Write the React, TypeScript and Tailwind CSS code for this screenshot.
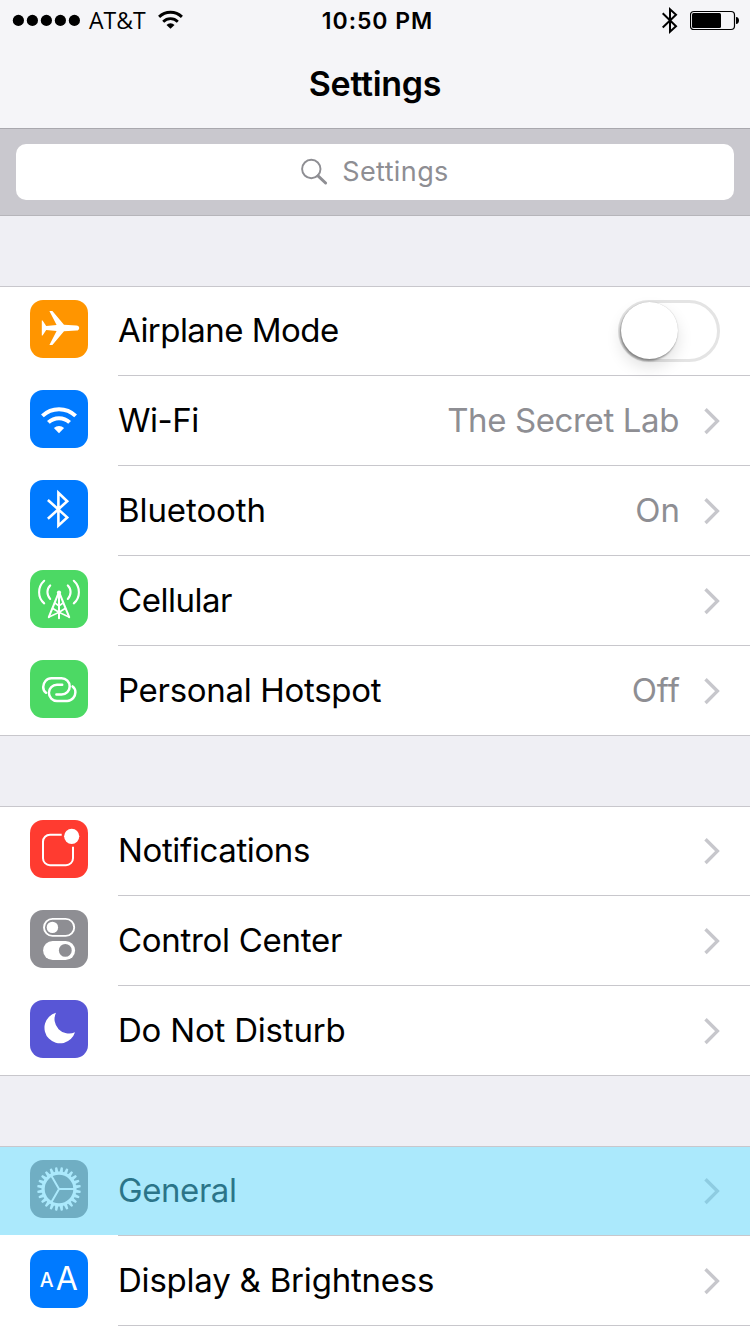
import type { ReactNode } from "react";

function AirplaneIcon() {
  return (
    <path
      fill="#fff"
      d="M46.4 25.4C48.2 25.4 49.2 26.6 49.2 28C49.2 29.4 48.2 30.6 46.4 30.6L34 31.2L22.4 45H19.4L26.6 31L16.2 30.1L12.6 35.4H11.8V20.6H12.6L16.2 25.9L26.6 25L19.4 11H22.4L34 24.8Z"
    />
  );
}

function WifiIcon() {
  return (
    <>
      <g fill="none" stroke="#fff" strokeWidth="4">
        <path d="M12.4 25.9A24 24 0 0 1 45.6 25.9" />
        <path d="M18.4 32.4A15.4 15.4 0 0 1 39.6 32.4" />
      </g>
      <path fill="#fff" d="M29 43.2L23.9 37.9A7.8 7.8 0 0 1 34.1 37.9Z" />
    </>
  );
}

function BluetoothIcon() {
  return (
    <path
      fill="none"
      stroke="#fff"
      strokeWidth="2.6"
      d="M17.9 20L37.2 37.4L28.4 45.6V12.8L37.2 21.2L17.9 38.8"
    />
  );
}

function CellularIcon() {
  return (
    <g fill="none" stroke="#fff" strokeLinecap="round">
      <g strokeWidth="2.1">
        <path d="M14.2 10.8C7.4 17 7.4 27.5 14.2 33.4" />
        <path d="M20.2 15.4C16.5 19 16.5 25.2 20.2 28.9" />
        <path d="M43.8 10.8C50.6 17 50.6 27.5 43.8 33.4" />
        <path d="M37.8 15.4C41.5 19 41.5 25.2 37.8 28.9" />
      </g>
      <circle cx="29" cy="22.6" r="2.1" fill="#fff" stroke="none" />
      <path strokeWidth="2" d="M28.6 23L18.8 47.2M29.4 23L39.2 47.2M29 23V48.2" />
      <path strokeWidth="1.6" d="M19 47L29 42.3L39 47M22.5 38.3L29 42.3L35.5 38.3M25 33L29 36L33 33" />
    </g>
  );
}

function HotspotIcon() {
  const link =
    "M16 32.8C14.1 31.4 13.2 29.4 13.2 27C13.2 22.6 16.5 18.3 21.4 18.3H31.6A8.1 8.1 0 0 1 31.6 34.5H26.4";
  return (
    <g fill="none" stroke="#fff" strokeWidth="2.5" strokeLinecap="round">
      <path d={link} />
      <path d={link} transform="rotate(180 29.3 29.6)" />
    </g>
  );
}

function NotificationsIcon() {
  return (
    <>
      <path
        fill="none"
        stroke="#fff"
        strokeWidth="2"
        d="M31.7 14.7H20A7 7 0 0 0 13 21.7V38.2A7 7 0 0 0 20 45.2H36A7 7 0 0 0 43 38.2V26.7"
      />
      <circle cx="41.7" cy="16.3" r="7.6" fill="#fff" />
    </>
  );
}

function ControlCenterIcon() {
  return (
    <>
      <rect x="14" y="8.9" width="30.2" height="17" rx="8.5" fill="none" stroke="#fff" strokeWidth="1.9" />
      <circle cx="22.4" cy="17.4" r="5.7" fill="#fff" />
      <rect x="13.1" y="31" width="32" height="19" rx="9.5" fill="#fff" />
      <circle cx="35.3" cy="40.4" r="6.4" fill="#8e8e93" />
    </>
  );
}

function MoonIcon() {
  return <path fill="#fff" d="M26 12.7A15.6 15.6 0 1 0 45 32.3A14.5 14.5 0 0 1 26 12.7Z" />;
}

function GearIcon() {
  return (
    <>
      {Array.from({ length: 24 }, (_, i) => (
        <path
          key={i}
          fill="#fff"
          d="M45.5 27.3L50.6 27.9Q51.2 29 50.6 30.1L45.5 30.7Z"
          transform={`rotate(${7.5 + i * 15} 29 29)`}
        />
      ))}
      <circle cx="29" cy="29" r="15.9" fill="none" stroke="#fff" strokeWidth="3.2" />
      <path fill="none" stroke="#fff" strokeWidth="2" d="M29 29H44M29 29L21.5 16M29 29L21.5 42" />
    </>
  );
}

function DisplayIcon() {
  return (
    <g fill="#fff" className="font-[Inter,sans-serif]">
      <text x="9.7" y="37" fontSize="19.5" fontWeight="500">A</text>
      <text x="25.8" y="40" fontSize="32" fontWeight="400">A</text>
    </g>
  );
}

function Chevron() {
  return (
    <svg className="h-[90px] w-4 shrink-0" viewBox="0 0 16 90" fill="none" stroke="#c7c7cc" strokeWidth="3.4">
      <path d="M1.5 33.2L13.4 45.1L1.5 57" />
    </svg>
  );
}

function Switch() {
  return (
    <div className="mt-3.5 h-[62px] w-[102px] shrink-0 rounded-full border-[3px] border-[#e4e4e4] bg-white">
      <div className="-mt-px h-[57px] w-[57px] rounded-full bg-white shadow-[0_8px_16px_rgba(0,0,0,0.12),-1px_2px_2px_rgba(0,0,0,0.35),0_0_1px_rgba(0,0,0,0.25)]" />
    </div>
  );
}

type RowProps = {
  icon: ReactNode;
  color: string;
  label: string;
  tracking: string;
  value?: string;
  valueTracking?: string;
  toggle?: boolean;
  last?: boolean;
  highlighted?: boolean;
};

function Row({ icon, color, label, tracking, value, valueTracking, toggle, last, highlighted }: RowProps) {
  return (
    <li className={`relative flex h-[90px] ${last ? "border-b border-[#c8c7cc]" : ""}`}>
      <div className="w-[118px] shrink-0 pt-3.5 pl-[30px]">
        <svg className={`h-[58px] w-[58px] rounded-[13px] ${color}`} viewBox="0 0 58 58">
          {icon}
        </svg>
      </div>
      <div className={`flex h-[90px] grow pr-[30px] ${last ? "" : "border-b border-[#c8c7cc]"}`}>
        <span
          className={`grow text-[33px] leading-[88px] whitespace-nowrap ${highlighted ? "text-[#0b1f24]" : "text-black"} ${tracking}`}
        >
          {label}
        </span>
        {value && (
          <span className={`text-[33px] leading-[88px] whitespace-nowrap text-[#8e8e93] ${valueTracking}`}>
            {value}
          </span>
        )}
        {toggle ? <Switch /> : <Chevron />}
      </div>
      {highlighted && <div className="absolute inset-x-0 top-px h-[88px] bg-[#4fd2f8]/48" />}
    </li>
  );
}

function Group({ children }: { children: ReactNode }) {
  return (
    <section className="mt-[70px] border-t border-[#c8c7cc] bg-white">
      <ul className="-mt-px">{children}</ul>
    </section>
  );
}

function StatusBar() {
  return (
    <div className="grid h-[41px] grid-cols-3">
      <div className="flex">
        <svg className="ml-3 h-[41px] w-[70px]" viewBox="12 0 70 41">
          {[18.4, 32.4, 46.4, 60.4, 74.4].map((x) => (
            <circle key={x} cx={x} cy="20.4" r="5.6" />
          ))}
        </svg>
        <span className="ml-[7px] w-[58px] font-['Open_Sans',sans-serif] text-[23px] leading-[40px]">AT&amp;T</span>
        <svg className="ml-[11px] h-[41px] w-[26px]" viewBox="158 0 26 41">
          <g fill="none" stroke="#000">
            <path strokeWidth="2.9" d="M159.1 16.9A16.3 16.3 0 0 1 181.9 16.9" />
            <path strokeWidth="2.8" d="M163.2 21.7A10.4 10.4 0 0 1 177.8 21.7" />
          </g>
          <path d="M170.5 28.8L166.5 25A5.6 5.6 0 0 1 174.5 25Z" />
        </svg>
      </div>
      <span className="pl-[5px] text-center text-[23px] leading-[43px] font-semibold tracking-[0.95px]">10:50 PM</span>
      <div className="flex justify-end">
        <svg className="mr-[10px] h-[41px] w-5" viewBox="660 0 20 41" fill="none" stroke="#000" strokeWidth="2">
          <path d="M662.7 13.3L676 26.2L670 31.7V9.3L676 14.8L662.7 27.4" />
        </svg>
        <svg className="mr-2.5 h-[41px] w-[50px]" viewBox="690 0 50 41">
          <rect x="690.5" y="11.5" width="44" height="18" rx="3.5" fill="none" stroke="#000" strokeWidth="1.2" />
          <rect x="692" y="13" width="29" height="15" rx="1.5" />
          <path d="M736 17C738 17 739 18.7 739 20.5C739 22.3 738 24 736 24Z" />
        </svg>
      </div>
    </div>
  );
}

export default function App() {
  return (
    <div className="h-[1334px] w-[750px] overflow-hidden bg-[#efeff4] font-[Inter,sans-serif] text-black">
      <header className="h-32 bg-[#f5f5f8]">
        <StatusBar />
        <h1 className="text-center text-[34px] leading-[86px] font-semibold tracking-[-0.3px]">Settings</h1>
      </header>
      <div className="h-[88px] border-t border-b border-t-[#a9a8ae] border-b-[#b6b5ba] bg-[#c9c8ce] px-4 pt-[15px]">
        <div className="flex h-14 items-center justify-center rounded-[10px] bg-white pr-px">
          <svg className="mr-3.5 h-7 w-7" viewBox="300 158 28 28" fill="none" stroke="#8e8e93">
            <circle cx="311.3" cy="169" r="9.2" strokeWidth="1.9" />
            <path d="M318 175.8L325.6 183" strokeWidth="3" strokeLinecap="round" />
          </svg>
          <span className="text-[27px] leading-[56px] tracking-[0.4px] text-[#8e8e93]">Settings</span>
        </div>
      </div>

      <Group>
        <Row icon={<AirplaneIcon />} color="bg-[#ff9500]" label="Airplane Mode" tracking="tracking-[-0.54px]" toggle />
        <Row
          icon={<WifiIcon />}
          color="bg-[#007aff]"
          label="Wi-Fi"
          tracking="tracking-[-0.5px]"
          value="The Secret Lab"
          valueTracking="mr-[25px] tracking-[-0.38px]"
        />
        <Row
          icon={<BluetoothIcon />}
          color="bg-[#007aff]"
          label="Bluetooth"
          tracking="tracking-[-0.08px]"
          value="On"
          valueTracking="mr-6 tracking-[0px]"
        />
        <Row icon={<CellularIcon />} color="bg-[#4cd964]" label="Cellular" tracking="tracking-[-0.48px]" />
        <Row
          icon={<HotspotIcon />}
          color="bg-[#4cd964]"
          label="Personal Hotspot"
          tracking="tracking-[-0.3px]"
          value="Off"
          valueTracking="mr-6 tracking-[0px]"
          last
        />
      </Group>

      <Group>
        <Row icon={<NotificationsIcon />} color="bg-[#ff3b30]" label="Notifications" tracking="tracking-[-0.37px]" />
        <Row icon={<ControlCenterIcon />} color="bg-[#8e8e93]" label="Control Center" tracking="tracking-[-0.29px]" />
        <Row icon={<MoonIcon />} color="bg-[#5856d6]" label="Do Not Disturb" tracking="tracking-[-0.2px]" last />
      </Group>

      <Group>
        <Row icon={<GearIcon />} color="bg-[#8e8e93]" label="General" tracking="tracking-[-0.43px]" highlighted />
        <Row
          icon={<DisplayIcon />}
          color="bg-[#007aff]"
          label="Display &amp; Brightness"
          tracking="tracking-[-0.21px]"
        />
        <Row icon={null} color="bg-[#007aff]" label="" tracking="tracking-normal" />
      </Group>
    </div>
  );
}
